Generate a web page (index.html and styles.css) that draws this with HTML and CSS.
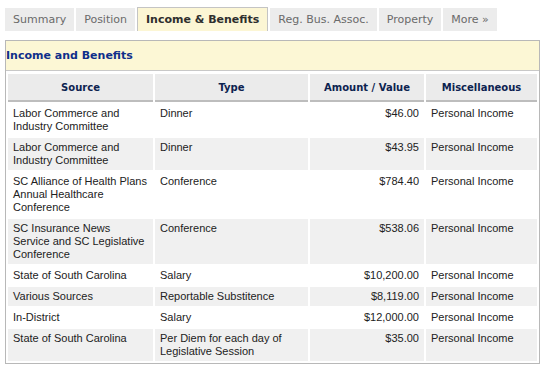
FILE: index.html
```html
<!DOCTYPE html>
<html>
<head>
<meta charset="utf-8">
<link rel="stylesheet" href="styles.css">
</head>
<body>
<ul class="tabs">
  <li class="tab">Summary</li>
  <li class="tab">Position</li>
  <li class="tab active">Income &amp; Benefits</li>
  <li class="tab">Reg. Bus. Assoc.</li>
  <li class="tab">Property</li>
  <li class="tab">More »</li>
</ul>
<div class="panel">
  <h2 class="panel-title">Income and Benefits</h2>
  <table class="grid">
    <colgroup>
      <col class="c-source">
      <col class="c-type">
      <col class="c-amount">
      <col class="c-misc">
    </colgroup>
    <thead>
      <tr><th>Source</th><th>Type</th><th>Amount / Value</th><th>Miscellaneous</th></tr>
    </thead>
    <tbody>
      <tr><td>Labor Commerce and Industry Committee</td><td>Dinner</td><td class="num">$46.00</td><td>Personal Income</td></tr>
      <tr class="alt"><td>Labor Commerce and Industry Committee</td><td>Dinner</td><td class="num">$43.95</td><td>Personal Income</td></tr>
      <tr><td>SC Alliance of Health Plans Annual Healthcare Conference</td><td>Conference</td><td class="num">$784.40</td><td>Personal Income</td></tr>
      <tr class="alt"><td>SC Insurance News Service and SC Legislative Conference</td><td>Conference</td><td class="num">$538.06</td><td>Personal Income</td></tr>
      <tr><td>State of South Carolina</td><td>Salary</td><td class="num">$10,200.00</td><td>Personal Income</td></tr>
      <tr class="alt"><td>Various Sources</td><td>Reportable Substitence</td><td class="num">$8,119.00</td><td>Personal Income</td></tr>
      <tr><td>In-District</td><td>Salary</td><td class="num">$12,000.00</td><td>Personal Income</td></tr>
      <tr class="alt"><td>State of South Carolina</td><td>Per Diem for each day of Legislative Session</td><td class="num">$35.00</td><td>Personal Income</td></tr>
    </tbody>
  </table>
</div>
</body>
</html>
```
FILE: styles.css
```css
html, body {
  margin: 0;
  padding: 0;
  background: #ffffff;
}
body {
  padding: 7px 0 0 5px;
  font-family: "DejaVu Sans", Verdana, sans-serif;
}
.tabs {
  list-style: none;
  margin: 0;
  padding: 0;
  display: flex;
  align-items: flex-end;
  gap: 2px;
  height: 24px;
}
.tab {
  height: 23px;
  line-height: 23px;
  padding: 0 8px;
  background: #ececec;
  color: #6a6a6a;
  font-size: 11px;
  box-sizing: border-box;
}
.tab.active {
  height: 24px;
  line-height: 23px;
  padding: 0 8px;
  background: #fcf6d4;
  border: 1px solid #c4c4c4;
  border-bottom: none;
  color: #2e2e2e;
  font-weight: bold;
  font-size: 11px;
}
.panel {
  margin-top: 9px;
  width: 535px;
  box-sizing: border-box;
  border: 1px solid #b8b8b8;
}
.panel-title {
  margin: 0;
  height: 29px;
  line-height: 30px;
  background: #fcf7d5;
  border-bottom: 1px solid #c8c8c8;
  color: #0f2f8a;
  font-size: 11px;
  font-weight: bold;
  padding-left: 0;
}
.grid {
  width: 100%;
  table-layout: fixed;
  border-collapse: separate;
  border-spacing: 2px;
  margin-top: 1px;
}
.c-source { width: 145px; }
.c-type { width: 153px; }
.c-amount { width: 114px; }
.c-misc { width: 111px; }
.grid th {
  background: #ebebeb;
  border-bottom: 2px solid #bdbdbd;
  color: #0d2350;
  font-size: 10px;
  font-weight: bold;
  height: 26px;
  padding: 0 5px;
  text-align: center;
}
.grid td {
  font-family: "Liberation Sans", Arial, sans-serif;
  font-size: 11px;
  line-height: 13px;
  color: #222222;
  padding: 3px 5px;
  vertical-align: top;
}
.grid tr.alt td {
  background: #f0f0f0;
}
.grid td.num {
  text-align: right;
}
```
